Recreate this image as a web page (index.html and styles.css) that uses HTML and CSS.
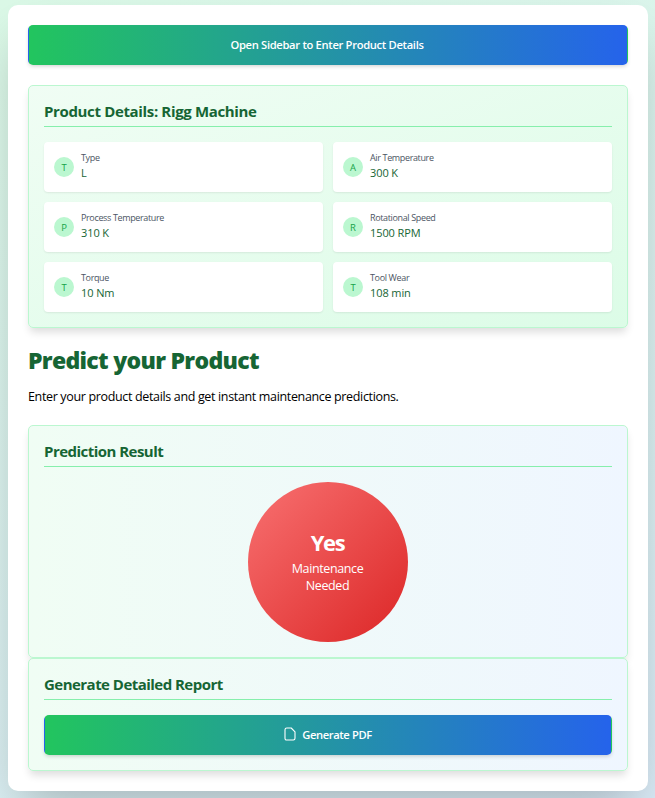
FILE: index.html
```html
<!DOCTYPE html>
<html lang="en">
<head>
<meta charset="utf-8">
<title>Predict your Product</title>
<link rel="stylesheet" href="styles.css">
</head>
<body>
<main class="page">
  <button class="btn btn-open"><span>Open Sidebar to Enter Product Details</span></button>

  <section class="panel details">
    <h2 class="panel-title">Product Details: Rigg Machine</h2>
    <div class="grid">
      <div class="item"><span class="badge">T</span><div class="text"><p class="label">Type</p><p class="value">L</p></div></div>
      <div class="item"><span class="badge">A</span><div class="text"><p class="label">Air Temperature</p><p class="value">300 K</p></div></div>
      <div class="item"><span class="badge">P</span><div class="text"><p class="label">Process Temperature</p><p class="value">310 K</p></div></div>
      <div class="item"><span class="badge">R</span><div class="text"><p class="label">Rotational Speed</p><p class="value">1500 RPM</p></div></div>
      <div class="item"><span class="badge">T</span><div class="text"><p class="label">Torque</p><p class="value">10 Nm</p></div></div>
      <div class="item"><span class="badge">T</span><div class="text"><p class="label">Tool Wear</p><p class="value">108 min</p></div></div>
    </div>
  </section>

  <h1 class="heading">Predict your Product</h1>
  <p class="intro">Enter your product details and get instant maintenance predictions.</p>

  <section class="panel result">
    <h2 class="panel-title">Prediction Result</h2>
    <div class="circle">
      <p class="answer">Yes</p>
      <p class="note">Maintenance<br>Needed</p>
    </div>
  </section>

  <section class="panel report">
    <h2 class="panel-title">Generate Detailed Report</h2>
    <button class="btn btn-pdf">
      <svg class="icon" viewBox="0 0 12 14" fill="none" stroke="currentColor" stroke-width="1.1" stroke-linejoin="round"><path d="M2.800 1h4.400L11 4.800v6.500c0 1-.6 1.700-1.600 1.700H2.600C1.600 13 1 12.300 1 11.300V2.800C1 1.700 1.700 1 2.800 1Z"/></svg>
      <span>Generate PDF</span>
    </button>
  </section>
</main>
</body>
</html>
```
FILE: styles.css
```css
* { box-sizing: border-box; margin: 0; }

html { background: #dbeafe; }

body {
  height: 798px;
  padding: 5px 7px 0 8px;
  overflow: hidden;
  background: linear-gradient(155deg, #dbf9e7, #daebf7);
  font-family: "Segoe UI", "Open Sans", "Noto Sans", sans-serif;
  font-size: 12.5px;
  color: #000;
}

.page {
  height: 786px;
  padding: 20px;
  border-radius: 10px;
  background: #fff;
  box-shadow: 0 25px 50px -12px rgba(0, 0, 0, 0.25);
}

.btn {
  display: flex;
  align-items: center;
  justify-content: center;
  gap: 6px;
  width: 100%;
  height: 40px;
  padding: 0 0 2px;
  border: 1px solid transparent;
  border-radius: 5px;
  background: linear-gradient(to right, #22c55e, #2563eb);
  box-shadow: 0 2px 4px -1px rgba(0, 0, 0, 0.2);
  color: #fff;
  font: inherit;
  font-size: 11.2px;
  font-weight: 650;
  letter-spacing: -0.32px;
}

.btn-open { padding-right: 2px; }

.btn-pdf { letter-spacing: -0.38px; }

.icon { width: 12px; height: 14px; }

.panel {
  padding: 15px;
  border: 1px solid #bbf7d0;
  border-radius: 5px;
  background: linear-gradient(to right, #f0fdf4, #eff6ff);
  box-shadow: 0 6px 9px -2px rgba(0, 0, 0, 0.14);
}

.panel-title {
  height: 26px;
  margin-bottom: 15px;
  border-bottom: 1px solid #86efac;
  color: #166534;
  font-size: 15px;
  font-weight: 700;
  line-height: 20px;
  letter-spacing: -0.53px;
}

.details {
  height: 243px;
  margin-top: 20px;
  background: linear-gradient(to bottom right, #f0fdf4, #dcfce7);
}

.details .panel-title { letter-spacing: -0.35px; }

.grid {
  display: grid;
  grid-template-columns: 1fr 1fr;
  gap: 10px;
}

.item {
  display: flex;
  align-items: center;
  gap: 7px;
  height: 50px;
  padding: 0 10px;
  border-radius: 4px;
  background: #fff;
  box-shadow: 0 1px 2px rgba(0, 0, 0, 0.08);
}

.text { padding-bottom: 4px; }

.badge {
  width: 20px;
  height: 20px;
  border-radius: 50%;
  background: #bbf7d0;
  color: #16a34a;
  font-size: 9.5px;
  line-height: 21px;
  text-align: center;
}

.label {
  color: #4b5563;
  font-size: 9px;
  line-height: 15px;
  letter-spacing: -0.36px;
}

.value {
  color: #166534;
  font-size: 11px;
  line-height: 15px;
  letter-spacing: -0.1px;
}

.heading {
  margin-top: 17px;
  color: #166534;
  font-size: 23px;
  font-weight: 800;
  line-height: 30px;
  letter-spacing: -0.7px;
}

.intro {
  height: 38px;
  margin-top: 12px;
  line-height: 20px;
  letter-spacing: -0.345px;
}

.result { height: 233px; }

.circle {
  display: flex;
  flex-direction: column;
  align-items: center;
  justify-content: center;
  width: 160px;
  height: 160px;
  margin: 0 auto;
  border-radius: 50%;
  background: linear-gradient(to bottom right, #f87171, #dc2626);
  color: #fff;
  text-align: center;
}

.answer {
  height: 30px;
  padding-right: 1px;
  font-size: 22px;
  font-weight: 700;
  line-height: 24px;
  letter-spacing: -1.4px;
}

.note {
  padding-right: 1px;
  line-height: 17px;
  letter-spacing: -0.38px;
}

.report { height: 113px; }
```
